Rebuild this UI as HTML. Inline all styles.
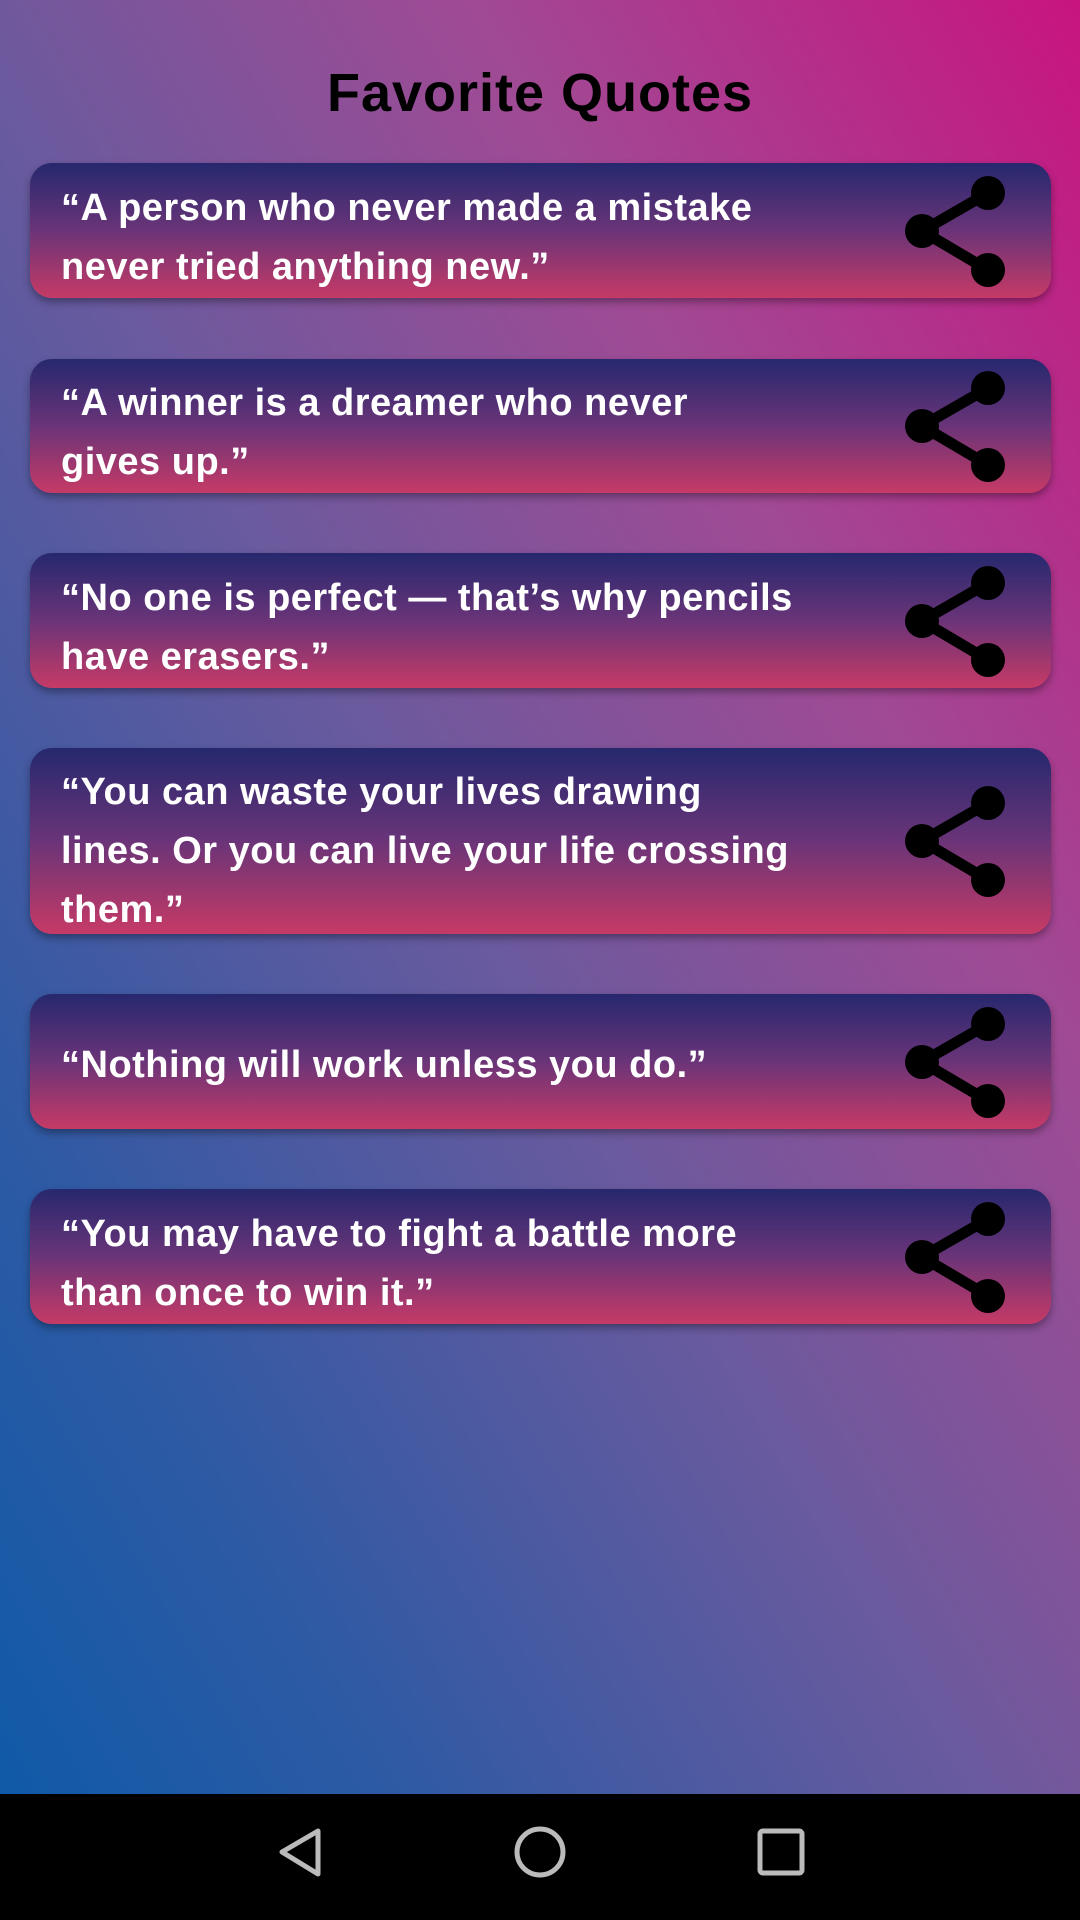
<!DOCTYPE html>
<html><head><meta charset="utf-8"><style>
html,body{margin:0;padding:0;width:1080px;height:1920px;overflow:hidden;}
html{background:#000;}
body{position:relative;font-family:"Liberation Sans",sans-serif;
background:linear-gradient(60deg,#0a5aa8 0%,#2f5aa4 22%,#6a5a9e 48%,#a04a94 72%,#c8147f 100%);}
.title{position:absolute;top:62px;left:0;width:1080px;text-align:center;font-size:54px;font-weight:bold;color:#000;letter-spacing:1px;}
.card{position:absolute;left:30px;width:1021px;border-radius:22px;background:linear-gradient(180deg,#26286e 0%,#6a3478 50%,#c63a66 100%);box-shadow:0 4px 8px rgba(0,0,0,.35);}
.txt{position:absolute;left:31px;right:150px;top:50%;transform:translateY(-44%);color:#fff;font-size:38px;line-height:59px;font-weight:bold;white-space:nowrap;letter-spacing:0.5px;}
.card svg{position:absolute;right:40px;top:50%;transform:translateY(-50%);}
.nav{position:absolute;left:0;top:1794px;width:1080px;height:126px;background:#000;}
</style></head><body>
<div class="title">Favorite Quotes</div>

<div class="card" style="top:163px;height:135px"><div class="txt">“A person who never made a mistake<br>never tried anything new.”</div>
<svg width="110" height="116" viewBox="0 0 110 116"><g stroke="#000" stroke-width="11"><line x1="21" y1="58" x2="87" y2="20"/><line x1="21" y1="58" x2="87" y2="97"/></g><g fill="#000"><circle cx="87" cy="20" r="17"/><circle cx="21" cy="58" r="17"/><circle cx="87" cy="97" r="17"/></g></svg></div>

<div class="card" style="top:359px;height:134px"><div class="txt">“A winner is a dreamer who never<br>gives up.”</div>
<svg width="110" height="116" viewBox="0 0 110 116"><g stroke="#000" stroke-width="11"><line x1="21" y1="58" x2="87" y2="20"/><line x1="21" y1="58" x2="87" y2="97"/></g><g fill="#000"><circle cx="87" cy="20" r="17"/><circle cx="21" cy="58" r="17"/><circle cx="87" cy="97" r="17"/></g></svg></div>

<div class="card" style="top:553px;height:135px"><div class="txt">“No one is perfect — that’s why pencils<br>have erasers.”</div>
<svg width="110" height="116" viewBox="0 0 110 116"><g stroke="#000" stroke-width="11"><line x1="21" y1="58" x2="87" y2="20"/><line x1="21" y1="58" x2="87" y2="97"/></g><g fill="#000"><circle cx="87" cy="20" r="17"/><circle cx="21" cy="58" r="17"/><circle cx="87" cy="97" r="17"/></g></svg></div>

<div class="card" style="top:748px;height:186px"><div class="txt">“You can waste your lives drawing<br>lines. Or you can live your life crossing<br>them.”</div>
<svg width="110" height="116" viewBox="0 0 110 116"><g stroke="#000" stroke-width="11"><line x1="21" y1="58" x2="87" y2="20"/><line x1="21" y1="58" x2="87" y2="97"/></g><g fill="#000"><circle cx="87" cy="20" r="17"/><circle cx="21" cy="58" r="17"/><circle cx="87" cy="97" r="17"/></g></svg></div>

<div class="card" style="top:994px;height:135px"><div class="txt">“Nothing will work unless you do.”</div>
<svg width="110" height="116" viewBox="0 0 110 116"><g stroke="#000" stroke-width="11"><line x1="21" y1="58" x2="87" y2="20"/><line x1="21" y1="58" x2="87" y2="97"/></g><g fill="#000"><circle cx="87" cy="20" r="17"/><circle cx="21" cy="58" r="17"/><circle cx="87" cy="97" r="17"/></g></svg></div>

<div class="card" style="top:1189px;height:135px"><div class="txt">“You may have to fight a battle more<br>than once to win it.”</div>
<svg width="110" height="116" viewBox="0 0 110 116"><g stroke="#000" stroke-width="11"><line x1="21" y1="58" x2="87" y2="20"/><line x1="21" y1="58" x2="87" y2="97"/></g><g fill="#000"><circle cx="87" cy="20" r="17"/><circle cx="21" cy="58" r="17"/><circle cx="87" cy="97" r="17"/></g></svg></div>

<div class="nav"><svg width="1080" height="126" viewBox="0 0 1080 126"><g fill="none" stroke="#bbb" stroke-width="5"><path d="M318 37 L282 58 L318 80 Z" stroke-linejoin="round"/><circle cx="540" cy="58" r="23"/><rect x="760" y="37" width="42" height="42" rx="3"/></g></svg></div>
</body></html>
